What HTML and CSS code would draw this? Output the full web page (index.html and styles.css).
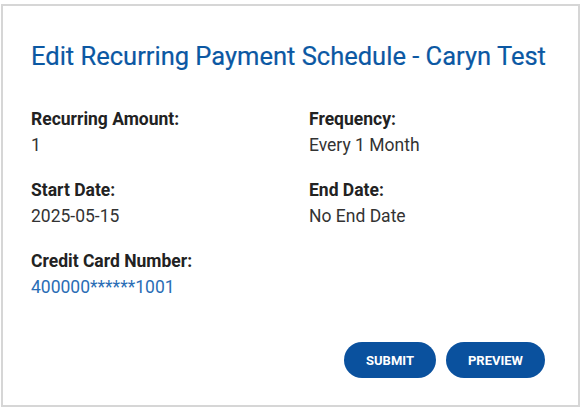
FILE: index.html
```html
<!DOCTYPE html>
<html>
<head>
<meta charset="utf-8">
<link rel="stylesheet" href="styles.css">
</head>
<body>
<div class="card">
  <h1 class="title">Edit Recurring Payment Schedule - Caryn Test</h1>
  <div class="fields">
    <div class="field">
      <div class="label">Recurring Amount:</div>
      <div class="value">1</div>
    </div>
    <div class="field">
      <div class="label">Frequency:</div>
      <div class="value">Every 1 Month</div>
    </div>
    <div class="field">
      <div class="label">Start Date:</div>
      <div class="value">2025-05-15</div>
    </div>
    <div class="field">
      <div class="label">End Date:</div>
      <div class="value">No End Date</div>
    </div>
    <div class="field">
      <div class="label">Credit Card Number:</div>
      <div class="value link">400000******1001</div>
    </div>
  </div>
  <div class="actions">
    <button class="btn">SUBMIT</button>
    <button class="btn">PREVIEW</button>
  </div>
</div>
</body>
</html>
```
FILE: styles.css
```css
html, body {
  margin: 0;
  padding: 0;
  background: #fff;
}
body {
  font-family: Roboto, "Liberation Sans", sans-serif;
  padding: 4px 3px 1px 1px;
}
.card {
  box-sizing: border-box;
  height: 403px;
  border: 2px solid #d6d6d6;
  padding: 34px 30px 0 28px;
}
.title {
  margin: 0;
  font-size: 25.5px;
  font-weight: 400;
  color: #0b58a3;
  line-height: 32px;
  white-space: nowrap;
  -webkit-text-stroke: 0.2px #0b58a3;
}
.fields {
  margin-top: 34px;
  display: grid;
  grid-template-columns: 278px 1fr;
  row-gap: 19px;
}
.label {
  font-size: 17.5px;
  font-weight: 700;
  color: #222;
  line-height: 26px;
}
.value {
  font-size: 17.5px;
  color: #333;
  line-height: 26px;
}
.value.link {
  color: #2a6db5;
}
.actions {
  margin-top: 42px;
  padding-right: 3px;
  display: flex;
  justify-content: flex-end;
  gap: 10px;
}
.btn {
  height: 36px;
  border: none;
  border-radius: 18px;
  background: #0a519e;
  color: #fff;
  font-family: Roboto, "Liberation Sans", sans-serif;
  font-weight: 700;
  font-size: 13px;
  padding: 0 22px;
}
```
